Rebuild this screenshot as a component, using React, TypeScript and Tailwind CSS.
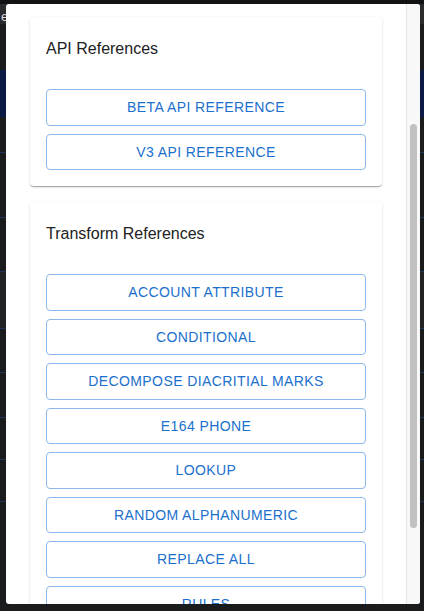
import React from 'react';

const apiRefs = ['Beta API Reference', 'V3 API Reference'];
const transformRefs = [
  'Account Attribute',
  'Conditional',
  'Decompose Diacritial Marks',
  'E164 Phone',
  'Lookup',
  'Random Alphanumeric',
  'Replace All',
  'Rules',
  'Split',
];

const RefCard: React.FC<{ title: string; items: string[] }> = ({ title, items }) => (
  <div className="rounded bg-white px-4 pt-5 pb-4 shadow-[0_2px_1px_-1px_rgba(0,0,0,0.2),0_1px_1px_0_rgba(0,0,0,0.14),0_1px_3px_0_rgba(0,0,0,0.12)]">
    <h2 className="mb-7 h-6 text-base leading-6 text-[#222]">{title}</h2>
    <div className="flex flex-col gap-2">
      {items.map((item) => (
        <button
          key={item}
          className="h-[36.5px] shrink-0 rounded border border-[#8ab8ea] text-sm uppercase tracking-[0.4px] text-[#1a70cc]"
        >
          {item}
        </button>
      ))}
    </div>
  </div>
);

const bgRows = [
  { h: 'h-[4px]', c: 'bg-[#111213]' },
  { h: 'h-[20px]', c: 'bg-[#2a2b2d]' },
  { h: 'h-[46px]', c: 'bg-[#1a1b1c]' },
  { h: 'h-[47px]', c: 'bg-[#0b1a45]' },
  { h: 'h-[36px]', c: 'bg-[#1b1c1d] border-b border-[#1f3458]' },
  { h: 'h-[65px]', c: 'bg-[#1a1b1c] border-b border-[#1f3458]' },
  { h: 'h-[54px]', c: 'bg-[#1a1b1c] border-b border-[#1f3458]' },
  { h: 'h-[57px]', c: 'bg-[#202224] border-b border-[#1f3458]' },
  { h: 'h-[44px]', c: 'bg-[#1a1b1c] border-b border-[#1f3458]' },
  { h: 'h-[45px]', c: 'bg-[#1a1b1c] border-b border-[#1f3458]' },
  { h: 'h-[42px]', c: 'bg-[#1a1b1c] border-b border-[#1f3458]' },
  { h: 'h-[42px]', c: 'bg-[#1a1b1c] border-b border-[#1f3458]' },
  { h: 'h-[110px]', c: 'bg-[#1a1b1c]' },
];

export default function App() {
  return (
    <div className="relative h-[611px] w-[424px] overflow-hidden bg-[#1a1b1c] font-['Liberation_Sans',Arial,sans-serif]">
      <div className="flex flex-col">
        {bgRows.map((r, i) => (
          <div key={i} className={`${r.h} ${r.c} shrink-0`}>
            {i === 1 && <span className="pl-px text-[13px] leading-[20px] text-[#d8d8d8]">e</span>}
          </div>
        ))}
      </div>

      {/* modal sheet over the page */}
      <div className="absolute left-[6px] top-[4px] flex h-[600px] w-[414px] overflow-hidden rounded-[3px] bg-white">
        <div className="flex flex-1 flex-col gap-4 overflow-hidden px-6 pt-[13px]">
          <RefCard title="API References" items={apiRefs} />
          <RefCard title="Transform References" items={transformRefs} />
        </div>
        <div className="w-[14px] shrink-0 border-l border-[#e6e6e6] bg-[#f8f8f8] pl-[3px] pt-[120px]">
          <div className="h-[404px] w-[7px] rounded-full bg-[#c1c1c1]" />
        </div>
      </div>
    </div>
  );
}
